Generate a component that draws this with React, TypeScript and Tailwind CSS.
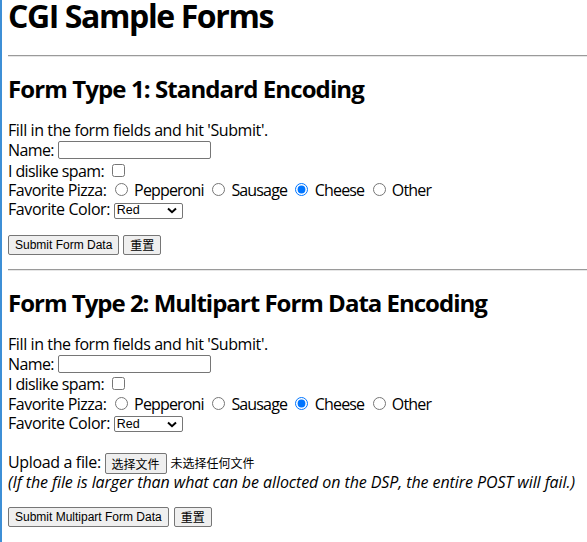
import React from "react";

const row = "h-[19.75px] leading-[19.75px] whitespace-nowrap";
const btn =
  "inline-flex items-center h-[20px] px-[6px] border border-[#767676] rounded-[2px] bg-[#efefef] text-[12px] text-black tracking-normal align-middle font-['Liberation_Sans','Noto_Sans_CJK_SC',sans-serif]";
const cjk = "font-['Noto_Sans_CJK_SC',sans-serif] text-[12px] tracking-normal";

function Rule() {
  return <div className="h-[2px] border-t border-[#9a9a9a] border-b border-b-[#e6e6e6] -mr-[8px]" />;
}

function Radio({ name, checked }: { name: string; checked?: boolean }) {
  return (
    <input
      type="radio"
      name={name}
      defaultChecked={checked}
      className="ml-[5px] mr-[3px] mt-[3px] w-[13px] h-[13px] align-baseline"
    />
  );
}

function Fields({ id }: { id: string }) {
  return (
    <div className="mt-[20px] tracking-[-0.6px]">
      <div className={row + " tracking-[-0.4px]"}>Fill in the form fields and hit 'Submit'.</div>
      <div className={row}>
        Name:{" "}
        <span className="inline-block w-[153px] h-[18px] border border-[#767676] rounded-[2px] bg-white align-middle -mt-[2px]" />
      </div>
      <div className={row}>
        I dislike spam:{" "}
        <input type="checkbox" className="ml-[4px] mr-[3px] mt-[3px] w-[13px] h-[13px] align-baseline" />
      </div>
      <div className={row + " tracking-[-0.84px]"}>
        <span className="tracking-[-0.5px]">Favorite Pizza:</span> <Radio name={"p" + id} /> Pepperoni{" "}
        <Radio name={"p" + id} /> Sausage <Radio name={"p" + id} checked /> Cheese <Radio name={"p" + id} /> Other
      </div>
      <div className={row + " tracking-[-0.42px]"}>
        Favorite Color:{" "}
        <span className="inline-flex items-center justify-between w-[69px] h-[16px] pl-[2px] pr-[5px] border border-[#767676] rounded-[2px] bg-white align-middle text-[12.5px] leading-none tracking-normal font-['Liberation_Sans',sans-serif]">
          Red
          <svg width="10" height="7" viewBox="0 0 10 7">
            <path d="M1 1.5 L5 5.2 L9 1.5" fill="none" stroke="#000" strokeWidth="2" />
          </svg>
        </span>
      </div>
    </div>
  );
}

export default function App() {
  return (
    <div className="min-h-[542px] border-l-2 border-[#3d8fd6] pl-[6px] pr-0 overflow-hidden bg-white text-black text-[16px] font-['Open_Sans','Noto_Sans_CJK_SC',sans-serif]">
      <h1 className="h-[32px] leading-[32px] text-[32px] font-bold tracking-[-1.4px]">CGI Sample Forms</h1>

      <div className="mt-[23px]">
        <Rule />
      </div>
      <h2 className="mt-[20px] h-[24px] leading-[24px] text-[24px] font-bold tracking-[-0.9px]">
        Form Type 1: Standard Encoding
      </h2>
      <Fields id="1" />
      <div className="mt-[15px] flex gap-[4px]">
        <button className={btn}>Submit Form Data</button>
        <button className={btn}>
          <span className={cjk}>重置</span>
        </button>
      </div>

      <div className="mt-[14px]">
        <Rule />
      </div>
      <h2 className="mt-[20px] h-[24px] leading-[24px] text-[24px] font-bold tracking-[-1px]">
        Form Type 2: Multipart Form Data Encoding
      </h2>
      <Fields id="2" />
      <div className={"mt-[19.5px] tracking-[-0.35px] " + row}>
        Upload a file:{" "}
        <button className={btn + " h-[21px] px-[4px]"}>
          <span className={cjk}>选择文件</span>
        </button>{" "}
        <span className={cjk + " text-[12.5px]"}>未选择任何文件</span>
      </div>
      <div className={row + " italic tracking-[-0.08px]"}>
        (If the file is larger than what can be allocted on the DSP, the entire POST will fail.)
      </div>
      <div className="mt-[14.5px] flex gap-[5px]">
        <button className={btn}>Submit Multipart Form Data</button>
        <button className={btn}>
          <span className={cjk}>重置</span>
        </button>
      </div>
    </div>
  );
}
